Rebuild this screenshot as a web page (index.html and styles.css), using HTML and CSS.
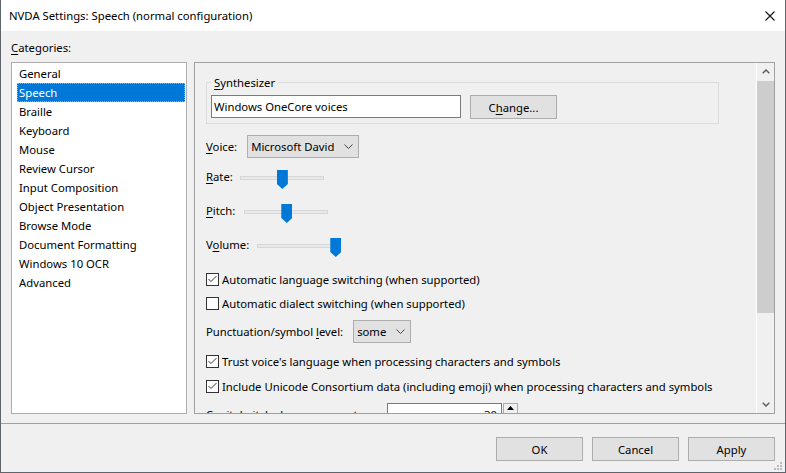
FILE: index.html
```html
<!DOCTYPE html>
<html>
<head>
<meta charset="utf-8">
<title>NVDA Settings: Speech</title>
<link rel="stylesheet" href="styles.css">
</head>
<body>
<div class="window">
  <div class="titlebar">
    <span class="title">NVDA Settings: Speech (normal configuration)</span>
    <svg class="close" width="10" height="10" viewBox="0 0 10 10"><path d="M0.5 0.5L9.5 9.5M9.5 0.5L0.5 9.5" stroke="#111" stroke-width="1.1" fill="none"/></svg>
  </div>
  <div class="body">
    <div class="main">
      <div class="cat-label"><u>C</u>ategories:</div>
      <div class="panes">
        <ul class="list">
          <li>General</li>
          <li class="sel">Speech</li>
          <li>Braille</li>
          <li>Keyboard</li>
          <li>Mouse</li>
          <li>Review Cursor</li>
          <li>Input Composition</li>
          <li>Object Presentation</li>
          <li>Browse Mode</li>
          <li>Document Formatting</li>
          <li>Windows 10 OCR</li>
          <li>Advanced</li>
        </ul>
        <div class="panel">
          <div class="panel-content">
            <fieldset class="group">
              <legend><u>S</u>ynthesizer</legend>
              <div class="synth-row">
                <div class="edit synth-edit">Windows OneCore voices</div>
                <div class="btn change">C<u>h</u>ange...</div>
              </div>
            </fieldset>

            <div class="row combo-row voice-row">
              <span class="lbl"><u>V</u>oice:</span>
              <div class="combo voice-combo">
                <span>Microsoft David</span>
                <svg class="chev" width="9" height="5" viewBox="0 0 9 5"><path d="M0.5 0.5L4.5 4.5L8.5 0.5" stroke="#444" fill="none"/></svg>
              </div>
            </div>

            <div class="row slider-row rate-row">
              <span class="lbl"><u>R</u>ate:</span>
              <div class="slider rate-slider"><div class="track"></div><div class="thumb" style="left:37px"></div></div>
            </div>
            <div class="row slider-row">
              <span class="lbl"><u>P</u>itch:</span>
              <div class="slider pitch-slider"><div class="track"></div><div class="thumb" style="left:37px"></div></div>
            </div>
            <div class="row slider-row">
              <span class="lbl">V<u>o</u>lume:</span>
              <div class="slider volume-slider"><div class="track"></div><div class="thumb" style="left:73px"></div></div>
            </div>

            <div class="row check-row cb1">
              <svg class="cb" width="13" height="13" viewBox="0 0 13 13"><rect x="0.5" y="0.5" width="12" height="12" fill="#fff" stroke="#333"/><path d="M2.5 6L5 8.5L10.5 3" stroke="#333" fill="none"/></svg>
              <span>Automatic language switching (when supported)</span>
            </div>
            <div class="row check-row cb2">
              <svg class="cb" width="13" height="13" viewBox="0 0 13 13"><rect x="0.5" y="0.5" width="12" height="12" fill="#fff" stroke="#333"/></svg>
              <span>Automatic dialect switching (when supported)</span>
            </div>

            <div class="row combo-row punct-row">
              <span class="lbl">Punctuation/symbol <u>l</u>evel:</span>
              <div class="combo punct-combo">
                <span>some</span>
                <svg class="chev" width="9" height="5" viewBox="0 0 9 5"><path d="M0.5 0.5L4.5 4.5L8.5 0.5" stroke="#444" fill="none"/></svg>
              </div>
            </div>

            <div class="row check-row cb3">
              <svg class="cb" width="13" height="13" viewBox="0 0 13 13"><rect x="0.5" y="0.5" width="12" height="12" fill="#fff" stroke="#333"/><path d="M2.5 6L5 8.5L10.5 3" stroke="#333" fill="none"/></svg>
              <span>Trust voice's language when processing characters and symbols</span>
            </div>
            <div class="row check-row cb4">
              <svg class="cb" width="13" height="13" viewBox="0 0 13 13"><rect x="0.5" y="0.5" width="12" height="12" fill="#fff" stroke="#333"/><path d="M2.5 6L5 8.5L10.5 3" stroke="#333" fill="none"/></svg>
              <span>Include Unicode Consortium data (including emoji) when processing characters and symbols</span>
            </div>

            <div class="row spin-row">
              <span class="lbl spin-lbl">Capital pitch change percentage</span>
              <div class="edit spin-edit">30</div>
              <div class="spin-btn">
                <svg width="7" height="4" viewBox="0 0 7 4"><path d="M3.5 0L7 4H0Z" fill="#000"/></svg>
              </div>
            </div>
          </div>
          <div class="scrollbar">
            <div class="sb-btn">
              <svg width="8" height="5" viewBox="0 0 8 5"><path d="M0.7 4.3L4 1L7.3 4.3" stroke="#606060" stroke-width="1.5" fill="none"/></svg>
            </div>
            <div class="sb-thumb"></div>
            <div class="sb-track"></div>
            <div class="sb-btn">
              <svg width="8" height="5" viewBox="0 0 8 5"><path d="M0.7 0.7L4 4L7.3 0.7" stroke="#606060" stroke-width="1.5" fill="none"/></svg>
            </div>
          </div>
        </div>
      </div>
    </div>
    <div class="footer">
      <div class="btn">OK</div>
      <div class="btn">Cancel</div>
      <div class="btn">Apply</div>
      <svg class="grip" width="8" height="8" viewBox="0 0 8 8"><path d="M6 0h2v2h-2zM3 3h2v2h-2zM6 3h2v2h-2zM0 6h2v2h-2zM3 6h2v2h-2zM6 6h2v2h-2z" fill="#bcbcbc"/></svg>
    </div>
  </div>
</div>
</body>
</html>
```

FILE: styles.css
```css
* { box-sizing: border-box; }
html, body { margin: 0; padding: 0; }
body {
  width: 786px;
  height: 473px;
  overflow: hidden;
  font-family: "Noto Sans", "Open Sans", sans-serif;
  font-size: 11.3px;
  color: #000;
  background: #f0f0f0;
}
u { text-decoration-thickness: 1px; text-underline-offset: 2px; }

.window {
  width: 786px;
  height: 473px;
  border: 1px solid #60656b;
  border-top: none;
  display: flex;
  flex-direction: column;
  background: #f0f0f0;
}
.titlebar {
  height: 31px;
  flex: none;
  background: #fff;
  display: flex;
  align-items: center;
  justify-content: space-between;
  padding: 0 10px 0 8px;
}
.title { line-height: 15px; }
.close { display: block; }

.body { flex: 1; display: flex; flex-direction: column; min-height: 0; }
.main { padding: 9px 10px 0 10px; flex: none; }
.cat-label { height: 16px; line-height: 16px; margin-bottom: 6px; }
.panes { display: flex; gap: 7px; height: 352px; }

.list {
  width: 176px;
  flex: none;
  margin: 0;
  padding: 1px 1px 0 5px;
  list-style: none;
  background: #fff;
  border: 1px solid #adadad;
}
.list li { height: 19px; line-height: 19px; padding-left: 2px; white-space: nowrap; }
.list li.sel {
  background: #0078d7;
  color: #fff;
  outline: 1px dotted #e8a050;
  outline-offset: -1px;
}

.panel {
  width: 581px;
  flex: none;
  border: 1px solid #a0a0a0;
  display: flex;
  overflow: hidden;
}
.panel-content {
  flex: 1;
  min-width: 0;
  overflow: hidden;
  padding: 12px 0 0 11px;
  white-space: nowrap;
}

.group {
  width: 513px;
  margin: 0;
  padding: 5px 4px 4px 4px;
  border: 1px solid #dcdcdc;
  min-width: 0;
}
.group legend { padding: 0 3px; line-height: 15px; }
.synth-row { display: flex; align-items: flex-start; }

.edit {
  height: 23px;
  line-height: 21px;
  background: #fff;
  border: 1px solid #7a7a7a;
  padding: 0 2px;
}
.synth-edit { width: 250px; }
.btn {
  width: 87px;
  height: 24px;
  flex: none;
  display: flex;
  align-items: center;
  justify-content: center;
  background: #e1e1e1;
  border: 1px solid #adadad;
  line-height: 15px;
}
.change { margin-left: 9px; }

.row { display: flex; align-items: center; }
.lbl { line-height: 15px; }

.combo-row { height: 23px; }
.combo-row .lbl { margin-right: 10px; }
.combo {
  height: 23px;
  display: flex;
  align-items: center;
  justify-content: space-between;
  background: #e1e1e1;
  border: 1px solid #adadad;
  padding: 0 5px 0 3px;
}
.chev { display: block; }
.voice-row { margin-top: 11px; }
.voice-combo { width: 112px; }
.punct-row { margin-top: 9px; }
.punct-combo { width: 58px; }

.slider-row { height: 19px; margin-top: 15px; align-items: flex-start; }
.slider-row.rate-row { margin-top: 12px; }
.slider-row .lbl { margin-top: -1px; margin-right: 7px; }
.slider { position: relative; width: 84px; height: 19px; }
.pitch-slider { margin-left: 2px; }
.volume-slider { margin-left: 1px; }
.track {
  margin-top: 6px;
  height: 4px;
  background: #e7eaea;
  border: 1px solid #d6d6d6;
}
.thumb {
  position: absolute;
  top: 0;
  width: 11px;
  height: 19px;
  background: #0078d7;
  clip-path: polygon(0 0, 100% 0, 100% 14px, 50% 19px, 0 14px);
}

.check-row { height: 15px; }
.cb { display: block; margin-right: 3px; flex: none; }
.cb1 { margin-top: 15px; }
.cb2 { margin-top: 9px; }
.cb3 { margin-top: 11px; }
.cb4 { margin-top: 10px; }

.spin-row { margin-top: 9px; height: 23px; align-items: center; }
.spin-lbl { width: 181px; }
.spin-edit { width: 115px; text-align: right; padding-right: 4px; }
.spin-btn {
  width: 15px;
  height: 23px;
  margin-left: 1px;
  border: 1px solid #adadad;
  background: #f0f0f0;
  display: flex;
  justify-content: center;
  padding-top: 2px;
}
.spin-btn svg { display: block; }

.scrollbar {
  width: 18px;
  flex: none;
  border-left: 1px solid #fff;
  display: flex;
  flex-direction: column;
  background: #f0f0f0;
}
.sb-btn { height: 17px; flex: none; display: flex; align-items: center; justify-content: center; }
.sb-btn svg { display: block; }
.sb-thumb { height: 232px; margin-top: 1px; background: #cdcdcd; flex: none; }
.sb-track { flex: 1; }

.footer {
  flex: 1;
  margin-top: 9px;
  border-top: 1px solid #a0a0a0;
  display: flex;
  justify-content: flex-end;
  align-items: flex-start;
  gap: 9px;
  padding: 13px 10px 0 0;
  position: relative;
}
.grip { position: absolute; right: 3px; bottom: 2px; display: block; }
```
